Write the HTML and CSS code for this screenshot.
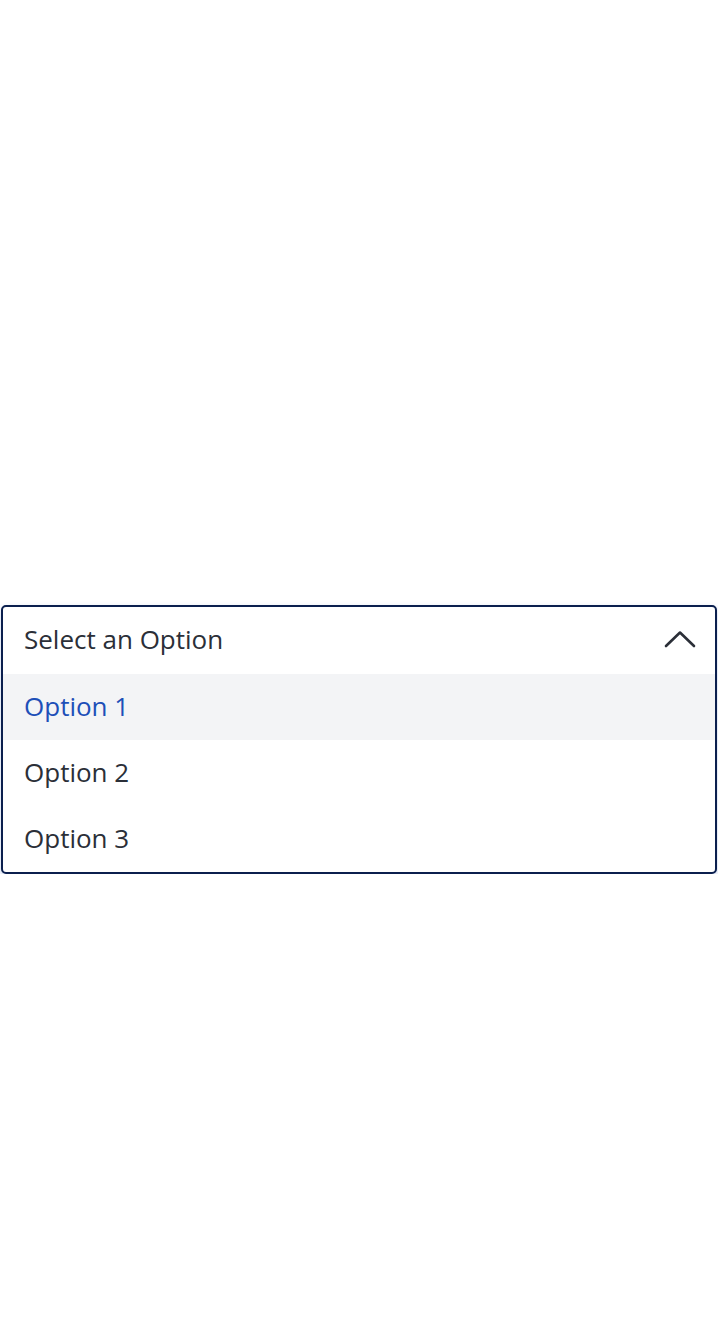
FILE: index.html
```html
<!DOCTYPE html>
<html lang="en">
<head>
<meta charset="utf-8">
<title>Select</title>
<link rel="stylesheet" href="styles.css">
</head>
<body>
<div class="page">
  <div class="select">
    <div class="select-head">
      <span class="select-label">Select an Option</span>
      <svg class="chevron" width="32" height="18" viewBox="0 0 32 18" aria-hidden="true">
        <path d="M2 16 L16 2.5 L30 16" fill="none" stroke="#2b2f38" stroke-width="2.6" stroke-linecap="round" stroke-linejoin="round"/>
      </svg>
    </div>
    <ul class="options">
      <li class="option option-active">Option 1</li>
      <li class="option">Option 2</li>
      <li class="option">Option 3</li>
    </ul>
  </div>
</div>
</body>
</html>
```
FILE: styles.css
```css
html, body {
  margin: 0;
  padding: 0;
  background: #ffffff;
}

.page {
  padding: 605px 1px 0 1px;
  font-family: "Open Sans", "Noto Sans", sans-serif;
}

.select {
  border: 2px solid #0b1f4e;
  border-radius: 5px;
  background: #ffffff;
  box-shadow: 0 3px 6px rgba(40, 90, 190, 0.25);
  overflow: hidden;
}

.select-head {
  box-sizing: border-box;
  height: 67px;
  display: flex;
  align-items: center;
  justify-content: space-between;
  padding: 0 20px 3px 21px;
}

.select-label {
  font-size: 26px;
  color: #2b2f38;
  line-height: 1;
}

.chevron {
  display: block;
  margin-right: -1px;
}

.options {
  list-style: none;
  margin: 0;
  padding: 0;
}

.option {
  box-sizing: border-box;
  height: 66px;
  display: flex;
  align-items: center;
  padding: 0 20px 2px 21px;
  font-size: 26px;
  color: #2b2f38;
}

.option-active {
  background: #f3f4f6;
  color: #1d4fb8;
}
```
